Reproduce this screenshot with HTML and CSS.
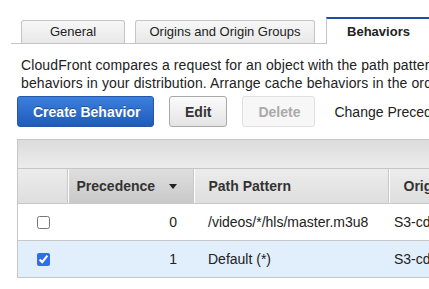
FILE: index.html
```html
<!DOCTYPE html>
<html lang="en">
<head>
    <meta charset="UTF-8">
    <title>Distribution Behaviors</title>
    <link rel="stylesheet" href="styles.css">
</head>
<body>
    <div class="tabs">
        <div class="tab tab-general">General</div>
        <div class="tab tab-origins">Origins and Origin Groups</div>
        <div class="tab active">Behaviors</div>
    </div>

    <p class="intro">CloudFront compares a request for an object with the path patterns in the cache<br>behaviors in your distribution. Arrange cache behaviors in the order you want them evaluated.</p>

    <div class="actions">
        <button type="button" class="btn primary">Create Behavior</button>
        <button type="button" class="btn">Edit</button>
        <button type="button" class="btn" disabled>Delete</button>
        <span class="change">Change Precedence:</span>
    </div>

    <div class="grid">
        <div class="toolbar"></div>
        <table>
            <thead>
                <tr>
                    <th class="col-check"></th>
                    <th class="col-prec sorted">Precedence <span class="arrow"></span></th>
                    <th class="col-path">Path Pattern</th>
                    <th class="col-origin">Origin or Origin Group</th>
                </tr>
            </thead>
            <tbody>
                <tr>
                    <td class="col-check"><input type="checkbox"></td>
                    <td class="num">0</td>
                    <td class="col-path">/videos/*/hls/master.m3u8</td>
                    <td class="origin">S3-cdn-videos</td>
                </tr>
                <tr class="selected">
                    <td class="col-check"><input type="checkbox" checked></td>
                    <td class="num">1</td>
                    <td class="col-path">Default (*)</td>
                    <td class="origin">S3-cdn-videos</td>
                </tr>
            </tbody>
        </table>
    </div>
</body>
</html>
```

FILE: styles.css
```css
html, body {
    overflow: hidden;
}
body {
    margin: 0;
    padding: 17px 0 0 0;
    font-family: "Liberation Sans", Arial, sans-serif;
    color: #222;
    background-color: #fff;
    width: 429px;
}
.tabs {
    display: flex;
    align-items: flex-end;
    margin-left: 11px;
    padding-left: 10px;
    border-bottom: 1px solid #c4c4c4;
    width: 600px;
}
.tab {
    flex: none;
    box-sizing: border-box;
    height: 23px;
    line-height: 22px;
    font-size: 13px;
    color: #222;
    text-align: center;
    background: linear-gradient(#f7f7f7, #e8e8e8);
    border: 1px solid #c4c4c4;
    border-bottom: none;
    border-radius: 3px 3px 0 0;
}
.tab-general {
    width: 104px;
}
.tab-origins {
    width: 180px;
    margin-left: 10px;
}
.tab.active {
    width: 104px;
    height: 27px;
    line-height: 25px;
    margin-left: 11px;
    margin-bottom: -1px;
    font-weight: bold;
    background: #fff;
    border: none;
    border-left: 1px solid #c4c4c4;
    border-top: 2px solid #1d4fa0;
    border-radius: 0;
}
.intro {
    margin: 12px 0 0 21px;
    width: 620px;
    font-size: 14px;
    line-height: 18px;
    letter-spacing: 0.12px;
    white-space: nowrap;
}
.actions {
    display: flex;
    align-items: center;
    gap: 15px;
    margin: 4px 0 0 17px;
    white-space: nowrap;
}
.btn {
    height: 31px;
    padding: 0 15px;
    font-family: inherit;
    font-size: 14px;
    font-weight: bold;
    color: #333;
    background: linear-gradient(#fbfbfb, #e4e4e4);
    border: 1px solid #a9a9a9;
    border-radius: 3px;
}
.btn.primary {
    width: 137px;
    color: #fff;
    background: linear-gradient(#3c7fdc, #1f5bbb);
    border-color: #2457a8;
    text-shadow: 0 -1px 0 rgba(0, 0, 0, 0.3);
}
.btn:disabled {
    width: 73px;
    color: #aaa;
    background: #f7f7f7;
    border-color: #e0e0e0;
}
.change {
    font-size: 14px;
    margin-left: 4px;
}
.grid {
    margin: 12px 0 0 17px;
    width: 600px;
    border-left: 1px solid #c6c6c6;
    border-top: 1px solid #c6c6c6;
}
.toolbar {
    height: 28px;
    background: linear-gradient(#dcdcdc, #ececec);
    border-bottom: 1px solid #c6c6c6;
}
table {
    border-collapse: collapse;
    font-size: 14px;
    table-layout: fixed;
    width: 570px;
}
th, td {
    box-sizing: border-box;
}
th {
    height: 34px;
    padding: 0 0 0 15px;
    text-align: left;
    font-weight: bold;
    color: #333;
    background: linear-gradient(#ececec, #dedede);
    border-right: 1px solid #c8c8c8;
    border-bottom: 1px solid #c8c8c8;
    box-shadow: inset 1px 0 0 #fff;
    white-space: nowrap;
}
th.col-check {
    width: 49px;
    box-shadow: none;
}
th.sorted {
    width: 126px;
    padding-left: 9px;
    background: linear-gradient(#dedede, #c9c9c9);
}
.arrow {
    display: inline-block;
    margin-left: 10px;
    vertical-align: 2px;
    border-left: 4px solid transparent;
    border-right: 4px solid transparent;
    border-top: 5px solid #222;
}
th.col-path {
    width: 195px;
}
th.col-origin {
    width: 200px;
}
td {
    height: 37px;
    padding: 0;
    color: #222;
    border-bottom: 1px solid #c8c8c8;
    white-space: nowrap;
}
td.col-check {
    padding-left: 19px;
}
td.col-check input {
    margin: 0;
    width: 13px;
    height: 13px;
    vertical-align: middle;
    accent-color: #2f6cf0;
}
td.num {
    text-align: right;
    padding-right: 16px;
}
td.col-path {
    padding-left: 15px;
}
td.origin {
    padding-left: 6px;
}
tr.selected td {
    background-color: #e1eefc;
}
```
